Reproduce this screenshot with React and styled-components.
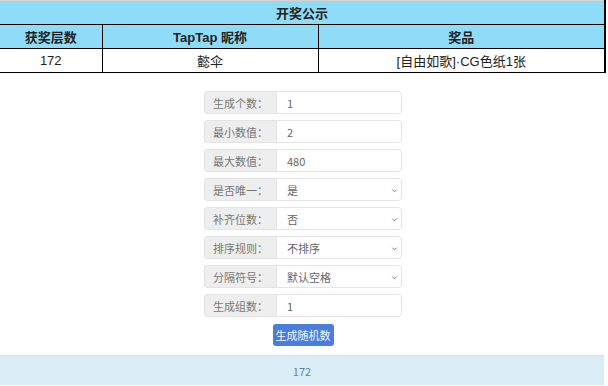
import React from "react";
import styled, { createGlobalStyle } from "styled-components";

const fields = [
  { label: "生成个数：", value: "1" },
  { label: "最小数值：", value: "2" },
  { label: "最大数值：", value: "480" },
  { label: "是否唯一：", value: "是", select: true },
  { label: "补齐位数：", value: "否", select: true },
  { label: "排序规则：", value: "不排序", select: true },
  { label: "分隔符号：", value: "默认空格", select: true },
  { label: "生成组数：", value: "1" },
];

const Chevron = () => (
  <Arrow viewBox="0 0 8 8" width="7" height="7">
    <path d="M1.5 3 L4 5.5 L6.5 3" fill="none" stroke="#777" strokeWidth="1.1" />
  </Arrow>
);

const App = () => {
  return (
    <Page>
      <GlobalStyle />
      <Table>
        <colgroup>
          <col style={{ width: 102 }} />
          <col style={{ width: 216 }} />
          <col />
        </colgroup>
        <tbody>
          <tr>
            <TitleCell colSpan={3}>开奖公示</TitleCell>
          </tr>
          <tr>
            <HeadCell>获奖层数</HeadCell>
            <HeadCell>TapTap 昵称</HeadCell>
            <HeadCell>奖品</HeadCell>
          </tr>
          <tr>
            <Cell>172</Cell>
            <Cell>懿伞</Cell>
            <Cell>[自由如歌]·CG色纸1张</Cell>
          </tr>
        </tbody>
      </Table>

      <Form>
        {fields.map((f) => (
          <Row key={f.label}>
            <Label>{f.label}</Label>
            <Field>
              {f.value}
              {f.select && <Chevron />}
            </Field>
          </Row>
        ))}
        <Button>生成随机数</Button>
      </Form>

      <Result>172</Result>
    </Page>
  );
};

export default App;

const GlobalStyle = createGlobalStyle`
  body {
    margin: 0;
    background: #fff;
    font-family: "Liberation Sans", "Noto Sans CJK SC", sans-serif;
  }
`;

const Page = styled.div`
  width: 606px;
  display: flex;
  flex-direction: column;
  align-items: center;
`;

const Table = styled.table`
  width: 606px;
  border-collapse: collapse;
  border-top: 1px solid #d4d4d4;
  border-right: 2px solid #000;
  color: #222;
  font-size: 13px;
  table-layout: fixed;
`;

const TitleCell = styled.td`
  height: 23px;
  padding: 0;
  background: #8fdcf9;
  text-align: center;
  font-weight: bold;
  border-bottom: 1px solid #000;
`;

const HeadCell = styled.td`
  height: 23px;
  padding: 0;
  background: #8fdcf9;
  text-align: center;
  font-weight: bold;
  border: 1px solid #000;
  border-top: none;
  &:first-child {
    border-left: none;
  }
`;

const Cell = styled.td`
  height: 23px;
  padding: 0;
  text-align: center;
  border: 1px solid #000;
  &:first-child {
    border-left: none;
  }
`;

const Form = styled.div`
  margin-top: 18px;
  display: flex;
  flex-direction: column;
  align-items: center;
  gap: 6px;
  font-family: "Noto Sans CJK SC", "Liberation Sans", sans-serif;
  font-size: 11px;
  color: #666;
`;

const Row = styled.div`
  display: flex;
  width: 198px;
  height: 23px;
`;

const Label = styled.div`
  width: 72px;
  box-sizing: border-box;
  display: flex;
  align-items: center;
  justify-content: center;
  background: #eee;
  border: 1px solid #e4e4e4;
  border-right: none;
  border-radius: 4px 0 0 4px;
  color: #777;
`;

const Field = styled.div`
  position: relative;
  flex: 1;
  box-sizing: border-box;
  display: flex;
  align-items: center;
  padding-left: 10px;
  border: 1px solid #e4e4e4;
  border-radius: 0 4px 4px 0;
  background: #fff;
`;

const Arrow = styled.svg`
  position: absolute;
  right: 3px;
  top: 8px;
`;

const Button = styled.div`
  margin-top: 1px;
  width: 61px;
  height: 22px;
  display: flex;
  align-items: center;
  justify-content: center;
  background: #4a7ddc;
  color: #f4f7ff;
  border-radius: 3px;
  font-size: 11px;
`;

const Result = styled.div`
  margin-top: 9px;
  align-self: flex-start;
  width: 604px;
  height: 30px;
  display: flex;
  align-items: center;
  justify-content: center;
  background: #d9edf7;
  border-top: 1px solid #cfe6f2;
  box-sizing: border-box;
  color: #5b88a8;
  font-family: "Noto Sans CJK SC", "Liberation Sans", sans-serif;
  font-size: 11px;
`;
